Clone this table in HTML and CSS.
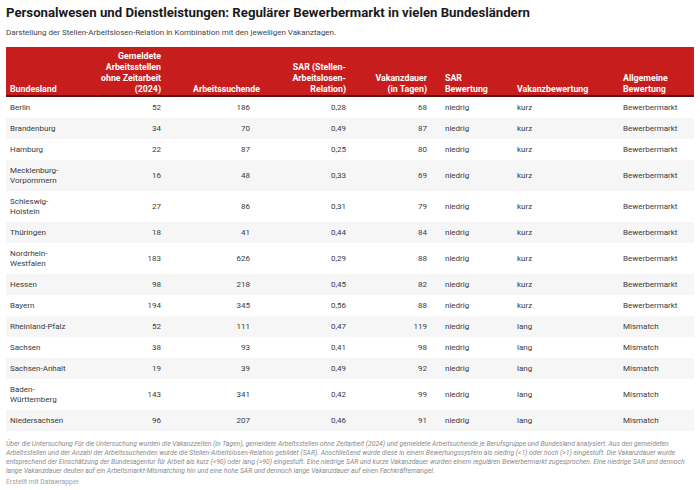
FILE: index.html
```html
<!DOCTYPE html>
<html lang="de">
<head>
<meta charset="utf-8">
<title>Personalwesen und Dienstleistungen</title>
<link rel="stylesheet" href="styles.css">
</head>
<body>
<div class="chart">
  <h1 class="title">Personalwesen und Dienstleistungen: Regulärer Bewerbermarkt in vielen Bundesländern</h1>
  <p class="subtitle">Darstellung der Stellen-Arbeitslosen-Relation in Kombination mit den jeweiligen Vakanztagen.</p>
  <table class="tbl">
    <colgroup>
      <col class="w1"><col class="w2"><col class="w3"><col class="w4"><col class="w5"><col class="w6"><col class="w7"><col class="w8">
    </colgroup>
    <thead>
      <tr>
        <th class="l c1">Bundesland</th>
        <th class="r">Gemeldete Arbeitsstellen ohne Zeitarbeit (2024)</th>
        <th class="r c3h">Arbeitssuchende</th>
        <th class="r">SAR (Stellen-Arbeitslosen-Relation)</th>
        <th class="r c5">Vakanzdauer (in Tagen)</th>
        <th class="l c6">SAR Bewertung</th>
        <th class="l">Vakanzbewertung</th>
        <th class="l">Allgemeine Bewertung</th>
      </tr>
    </thead>
    <tbody>
      <tr><td class="l c1">Berlin</td><td class="r">52</td><td class="r c3">186</td><td class="r">0,28</td><td class="r c5">68</td><td class="l c6">niedrig</td><td class="l">kurz</td><td class="l">Bewerbermarkt</td></tr>
      <tr><td class="l c1">Brandenburg</td><td class="r">34</td><td class="r c3">70</td><td class="r">0,49</td><td class="r c5">87</td><td class="l c6">niedrig</td><td class="l">kurz</td><td class="l">Bewerbermarkt</td></tr>
      <tr><td class="l c1">Hamburg</td><td class="r">22</td><td class="r c3">87</td><td class="r">0,25</td><td class="r c5">80</td><td class="l c6">niedrig</td><td class="l">kurz</td><td class="l">Bewerbermarkt</td></tr>
      <tr><td class="l c1">Mecklenburg-<br>Vorpommern</td><td class="r">16</td><td class="r c3">48</td><td class="r">0,33</td><td class="r c5">69</td><td class="l c6">niedrig</td><td class="l">kurz</td><td class="l">Bewerbermarkt</td></tr>
      <tr><td class="l c1">Schleswig-<br>Holstein</td><td class="r">27</td><td class="r c3">86</td><td class="r">0,31</td><td class="r c5">79</td><td class="l c6">niedrig</td><td class="l">kurz</td><td class="l">Bewerbermarkt</td></tr>
      <tr><td class="l c1">Thüringen</td><td class="r">18</td><td class="r c3">41</td><td class="r">0,44</td><td class="r c5">84</td><td class="l c6">niedrig</td><td class="l">kurz</td><td class="l">Bewerbermarkt</td></tr>
      <tr><td class="l c1">Nordrhein-<br>Westfalen</td><td class="r">183</td><td class="r c3">626</td><td class="r">0,29</td><td class="r c5">88</td><td class="l c6">niedrig</td><td class="l">kurz</td><td class="l">Bewerbermarkt</td></tr>
      <tr><td class="l c1">Hessen</td><td class="r">98</td><td class="r c3">218</td><td class="r">0,45</td><td class="r c5">82</td><td class="l c6">niedrig</td><td class="l">kurz</td><td class="l">Bewerbermarkt</td></tr>
      <tr><td class="l c1">Bayern</td><td class="r">194</td><td class="r c3">345</td><td class="r">0,56</td><td class="r c5">88</td><td class="l c6">niedrig</td><td class="l">kurz</td><td class="l">Bewerbermarkt</td></tr>
      <tr><td class="l c1">Rheinland-Pfalz</td><td class="r">52</td><td class="r c3">111</td><td class="r">0,47</td><td class="r c5">119</td><td class="l c6">niedrig</td><td class="l">lang</td><td class="l">Mismatch</td></tr>
      <tr><td class="l c1">Sachsen</td><td class="r">38</td><td class="r c3">93</td><td class="r">0,41</td><td class="r c5">98</td><td class="l c6">niedrig</td><td class="l">lang</td><td class="l">Mismatch</td></tr>
      <tr><td class="l c1">Sachsen-Anhalt</td><td class="r">19</td><td class="r c3">39</td><td class="r">0,49</td><td class="r c5">92</td><td class="l c6">niedrig</td><td class="l">lang</td><td class="l">Mismatch</td></tr>
      <tr><td class="l c1">Baden-<br>Württemberg</td><td class="r">143</td><td class="r c3">341</td><td class="r">0,42</td><td class="r c5">99</td><td class="l c6">niedrig</td><td class="l">lang</td><td class="l">Mismatch</td></tr>
      <tr><td class="l c1">Niedersachsen</td><td class="r">96</td><td class="r c3">207</td><td class="r">0,46</td><td class="r c5">91</td><td class="l c6">niedrig</td><td class="l">lang</td><td class="l">Mismatch</td></tr>
    </tbody>
  </table>
  <p class="notes">Über die Untersuchung Für die Untersuchung wurden die Vakanzzeiten (in Tagen), gemeldete Arbeitsstellen ohne Zeitarbeit (2024) und gemeldete Arbeitsuchende je Berufsgruppe und Bundesland analysiert. Aus den gemeldeten Arbeitsstellen und der Anzahl der Arbeitssuchenden wurde die Stellen-Arbeitslosen-Relation gebildet (SAR). Anschließend wurde diese in einem Bewertungssystem als niedrig (&lt;1) oder hoch (&gt;1) eingestuft. Die Vakanzdauer wurde entsprechend der Einschätzung der Bundesagentur für Arbeit als kurz (&lt;90) oder lang (&gt;90) eingestuft. Eine niedrige SAR und kurze Vakanzdauer wurden einem regulären Bewerbermarkt zugesprochen. Eine niedrige SAR und dennoch lange Vakanzdauer deuten auf ein Arbeitsmarkt-Mismatching hin und eine hohe SAR und dennoch lange Vakanzdauer auf einen Fachkräftemangel.</p>
  <p class="credit">Erstellt mit Datawrapper</p>
</div>
</body>
</html>
```
FILE: styles.css
```css
* { box-sizing: border-box; }
html, body { margin: 0; padding: 0; background: #fff; }
body { font-family: Roboto, "Noto Sans", Arial, sans-serif; color: #333; }
.chart { padding: 5px 6px 0 6px; }
.title { margin: 0; font-size: 13.2px; line-height: 16px; font-weight: 700; color: #1a1a1a; }
.subtitle { margin: 6px 0 0 0; font-size: 8px; line-height: 11px; color: #444; }
.tbl { margin-top: 9px; width: 688px; border-collapse: collapse; table-layout: fixed; font-size: 8px; }
.w1 { width: 89px; } .w2 { width: 70px; } .w3 { width: 99px; } .w4 { width: 86px; }
.w5 { width: 81px; } .w6 { width: 82px; } .w7 { width: 106px; } .w8 { width: 75px; }
.tbl th { background: #c71e1d; color: #fff; font-weight: 700; font-size: 8.8px; line-height: 11px; vertical-align: bottom; padding: 4px 4px 0 4px; border-bottom: 2px solid #5a1010; }
.tbl td { font-size: 8px; line-height: 10px; padding: 5.5px 4px; vertical-align: middle; color: #3a3a3a; }
.tbl tbody tr:nth-child(even) td { background: #f6f6f6; }
.l { text-align: left; }
.r { text-align: right; }
.c1 { padding-left: 4px; }
.tbl td.c3 { padding-right: 14px; }
.tbl .c5 { padding-left: 16px; padding-right: 4px; }
.tbl .c6 { padding-left: 14px; padding-right: 10px; }
.notes { margin: 9px 0 0 0; font-size: 6.8px; line-height: 9px; font-style: italic; color: #8a8a8a; }
.credit { margin: 2px 0 0 0; font-size: 6.8px; line-height: 9px; color: #a0a0a0; }
```
